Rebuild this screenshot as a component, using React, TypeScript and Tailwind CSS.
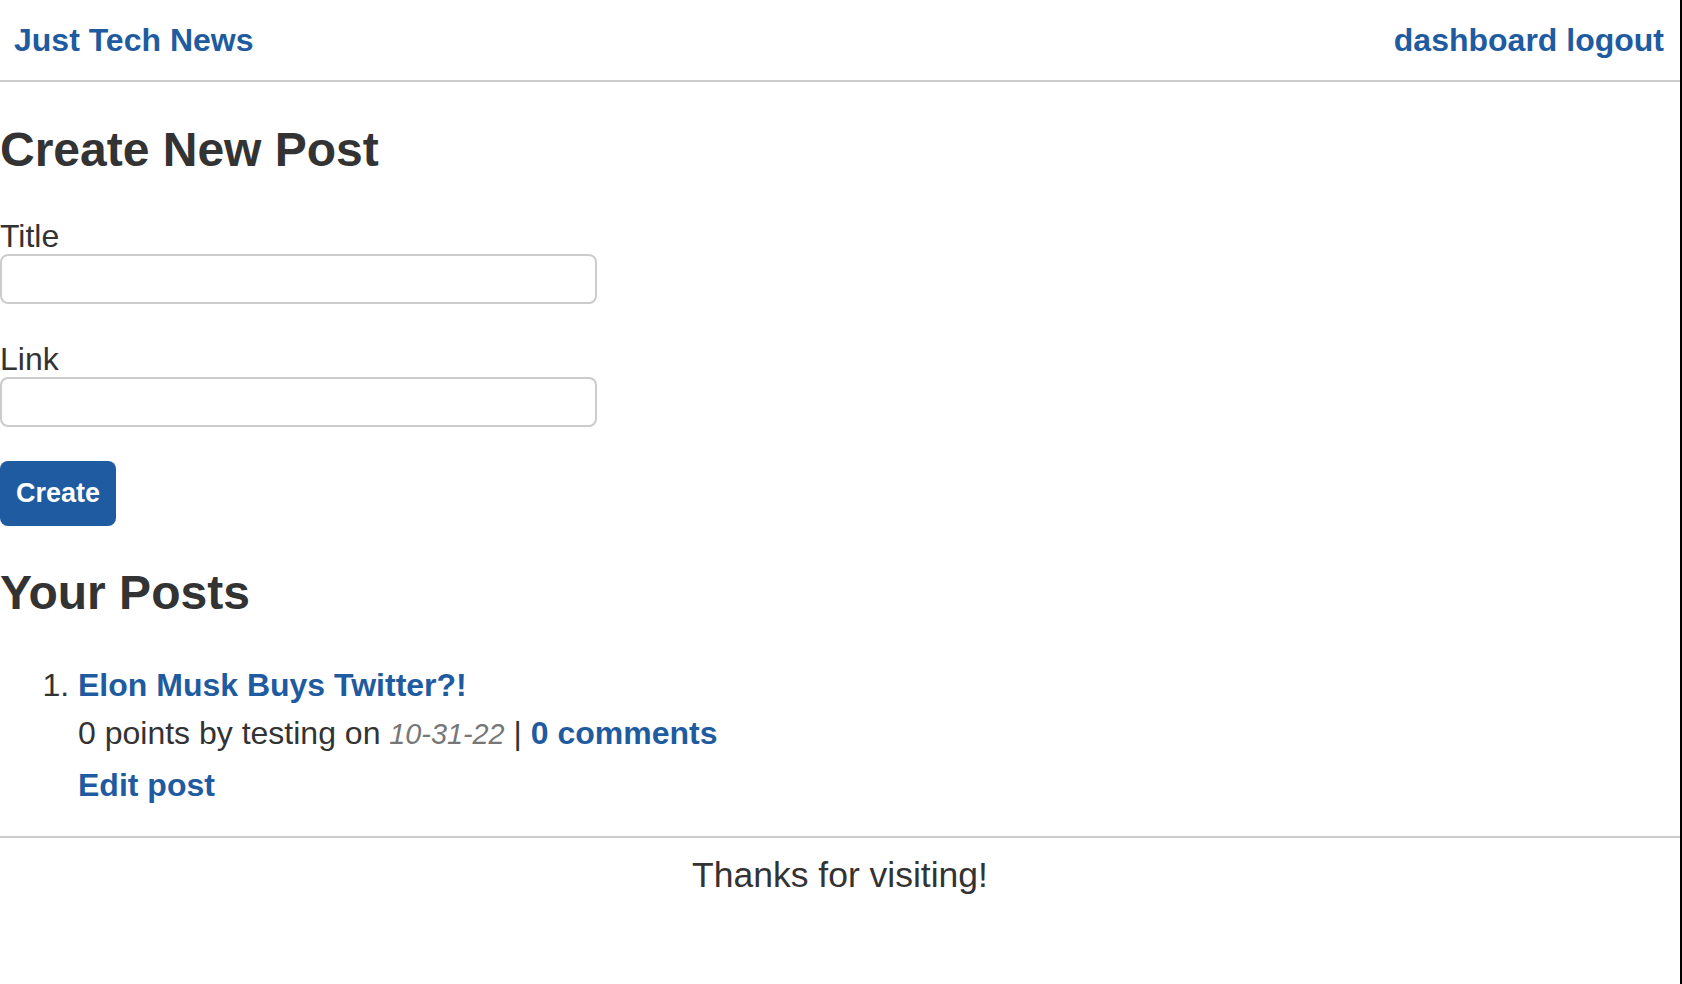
import React from 'react';

const blue = 'text-[#1f5ba0]';

function Header() {
  return (
    <header className="h-[82px] flex items-center justify-between pl-[14px] pr-[16px] border-b-2 border-[#cccccc]">
      <h1 className="text-[32px] leading-[36px] font-bold">
        <a href="#" className={blue}>
          Just Tech News
        </a>
      </h1>
      <nav className="text-[32px] leading-[36px] font-bold">
        <a href="#" className={blue}>
          dashboard
        </a>{' '}
        <a href="#" className={blue}>
          logout
        </a>
      </nav>
    </header>
  );
}

function NewPostForm() {
  return (
    <form onSubmit={(e) => e.preventDefault()}>
      <div className="mt-[40px]">
        <label htmlFor="post-title" className="block text-[32px] leading-[36px]">
          Title
        </label>
        <input
          id="post-title"
          type="text"
          className="block w-[597px] h-[50px] border-2 border-[#cccccc] rounded-[8px] px-3 text-[24px] outline-none"
        />
      </div>
      <div className="mt-[37px]">
        <label htmlFor="post-url" className="block text-[32px] leading-[36px]">
          Link
        </label>
        <input
          id="post-url"
          type="text"
          className="block w-[597px] h-[50px] border-2 border-[#cccccc] rounded-[8px] px-3 text-[24px] outline-none"
        />
      </div>
      <button
        type="submit"
        className="mt-[34px] h-[65px] px-4 rounded-[8px] bg-[#1f5ba0] text-white text-[27px] font-bold leading-none"
      >
        Create
      </button>
    </form>
  );
}

function PostList() {
  return (
    <ol className="mt-[46px] pl-[78px] list-decimal text-[32px] leading-[36px]">
      <li>
        <a href="#" className={`${blue} font-bold`}>
          Elon Musk Buys Twitter?!
        </a>
        <div className="mt-[12px]">
          0 points by testing on{' '}
          <span className="italic text-[28.8px] text-[#777777]">10-31-22</span>{' '}
          |{' '}
          <a href="#" className={`${blue} font-bold`}>
            0 comments
          </a>
        </div>
        <div className="mt-[15px]">
          <a href="#" className={`${blue} font-bold`}>
            Edit post
          </a>
        </div>
      </li>
    </ol>
  );
}

export default function App() {
  return (
    <div className="min-h-screen bg-white border-r-2 border-black text-[#333333] font-['Liberation_Sans',Arial,sans-serif]">
      <Header />
      <main>
        <h2 className="mt-[40px] text-[48px] leading-[56px] font-bold">Create New Post</h2>
        <NewPostForm />
        <h2 className="mt-[39px] text-[48px] leading-[56px] font-bold">Your Posts</h2>
        <PostList />
      </main>
      <footer className="mt-[33px] border-t-2 border-[#cccccc] pt-[17px] text-center text-[35.5px] leading-[40px]">
        Thanks for visiting!
      </footer>
    </div>
  );
}
